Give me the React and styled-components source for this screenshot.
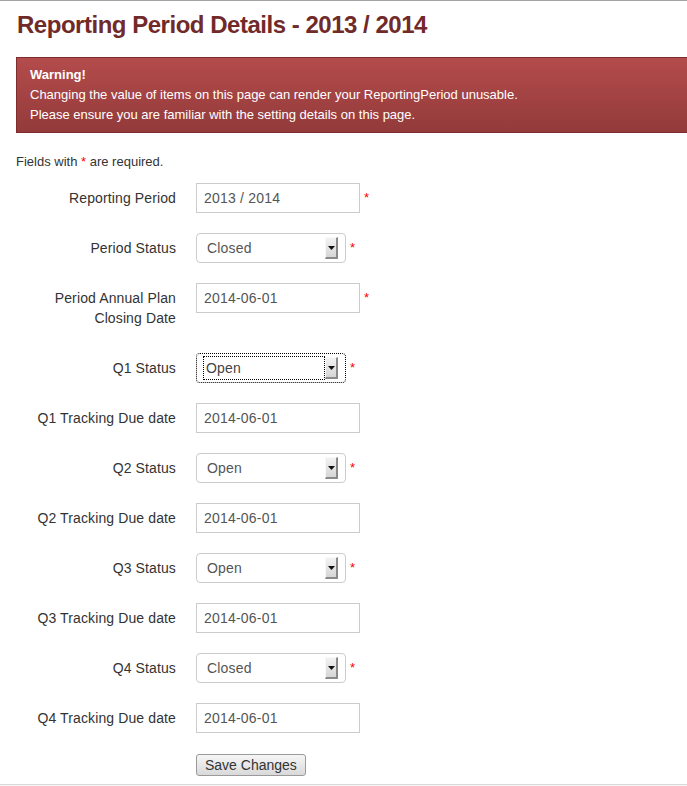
import React from "react";
import styled, { createGlobalStyle, css } from "styled-components";

const Global = createGlobalStyle`
  html, body { margin: 0; padding: 0; background: #fff; overflow: hidden; }
  body { font-family: "Liberation Sans", Arial, sans-serif; }
`;

const Page = styled.div`
  border-top: 1px solid #a3a3a3;
  min-height: 785px;
  display: flex;
  flex-direction: column;
`;

const Content = styled.div`
  padding-left: 16px;
  margin-right: -12px;
`;

const Title = styled.h1`
  margin: 4px 0 12px 1px;
  font-size: 24px;
  line-height: 40px;
  font-weight: bold;
  color: #712a2a;
  letter-spacing: -0.48px;
`;

const Alert = styled.div`
  border: 1px solid #7e2c2c;
  background: linear-gradient(#b44c4c, #933a3a);
  color: #fff;
  font-size: 13px;
  line-height: 20px;
  padding: 7px 14px 7px 13px;
`;

const AlertTitle = styled.div`
  font-weight: bold;
`;

const Note = styled.p`
  margin: 19px 0 11px 0;
  font-size: 13px;
  line-height: 20px;
  color: #333;
`;

const Req = styled.span`
  color: #f00;
  font-size: 13px;
  ${(p) =>
    p.$field &&
    css`
      margin-left: 4px;
      line-height: 30px;
      align-self: flex-start;
    `}
`;

const Form = styled.form`
  display: flex;
  flex-direction: column;
  gap: 20px;
`;

const Row = styled.div`
  display: flex;
  align-items: flex-start;
  gap: 20px;
`;

const Label = styled.label`
  width: 160px;
  flex: none;
  text-align: right;
  font-size: 14px;
  letter-spacing: 0.12px;
  line-height: 20px;
  padding: 5px 0;
  color: #333;
`;

const Controls = styled.div`
  display: flex;
  align-items: flex-start;
  margin-left: ${(p) => (p.$offset ? "180px" : "0")};
`;

const Input = styled.input`
  box-sizing: border-box;
  width: 164px;
  height: 30px;
  border: 1px solid #ccc;
  border-radius: 0;
  padding: 4px 6px 4px 7px;
  font-family: "Liberation Sans", Arial, sans-serif;
  font-size: 14px;
  letter-spacing: 0.2px;
  color: #555;
  background: #fff;
  outline: none;
`;

const Select = styled.div`
  box-sizing: border-box;
  width: 150px;
  height: 30px;
  border: 1px solid #ccc;
  border-radius: 4px;
  background: #fff;
  display: flex;
  align-items: center;
  padding: 0 7px 0 6px;
  font-size: 14px;
  letter-spacing: 0.2px;
  color: #555;
  ${(p) =>
    p.$focused &&
    css`
      border: 1px dotted #000;
    `}
`;

const SelectText = styled.span`
  flex: 1;
  box-sizing: border-box;
  height: 24px;
  line-height: 22px;
  padding-left: 3px;
  border: 1px solid transparent;
  ${(p) =>
    p.$focused &&
    css`
      border: 1px dotted #000;
      color: #444;
      padding-left: 2px;
    `}
`;

const ArrowBox = styled.span`
  box-sizing: border-box;
  width: 13px;
  height: 22px;
  flex: none;
  display: flex;
  align-items: center;
  justify-content: center;
  background: linear-gradient(#f2f2f2, #d6d6d6);
  border-top: 1px solid #f8f8f8;
  border-left: 1px solid #f8f8f8;
  border-right: 2px solid #8a8a8a;
  border-bottom: 2px solid #8a8a8a;
`;

const Button = styled.button`
  height: 22px;
  padding: 0 8px;
  border: 1px solid #9a9a9a;
  border-radius: 3px;
  background: linear-gradient(#f6f6f6, #d9d9d9);
  font-family: "Liberation Sans", Arial, sans-serif;
  font-size: 14px;
  color: #333;
  line-height: 20px;
  margin-top: 1px;
`;

const Footer = styled.div`
  margin-top: 8px;
  border-top: 1px solid #d8d8d8;
  background: #f6f6f6;
  flex: 1;
`;

function Arrow() {
  return (
    <svg width="7" height="4" viewBox="0 0 7 4">
      <path d="M0 0 H7 L3.5 4 Z" fill="#111" />
    </svg>
  );
}

function SelectBox({ value, focused }) {
  return (
    <Select $focused={focused}>
      <SelectText $focused={focused}>{value}</SelectText>
      <ArrowBox>
        <Arrow />
      </ArrowBox>
    </Select>
  );
}

const fields = [
  { label: "Reporting Period", type: "input", value: "2013 / 2014", req: true },
  { label: "Period Status", type: "select", value: "Closed", req: true },
  { label: "Period Annual Plan Closing Date", type: "input", value: "2014-06-01", req: true },
  { label: "Q1 Status", type: "select", value: "Open", req: true, focused: true },
  { label: "Q1 Tracking Due date", type: "input", value: "2014-06-01" },
  { label: "Q2 Status", type: "select", value: "Open", req: true },
  { label: "Q2 Tracking Due date", type: "input", value: "2014-06-01" },
  { label: "Q3 Status", type: "select", value: "Open", req: true },
  { label: "Q3 Tracking Due date", type: "input", value: "2014-06-01" },
  { label: "Q4 Status", type: "select", value: "Closed", req: true },
  { label: "Q4 Tracking Due date", type: "input", value: "2014-06-01" },
];

export default function App() {
  return (
    <>
      <Global />
      <Page>
        <Content>
          <Title>Reporting Period Details - 2013 / 2014</Title>
          <Alert>
            <AlertTitle>Warning!</AlertTitle>
            <div>Changing the value of items on this page can render your ReportingPeriod unusable.</div>
            <div>Please ensure you are familiar with the setting details on this page.</div>
          </Alert>
          <Note>
            Fields with <Req>*</Req> are required.
          </Note>
          <Form onSubmit={(e) => e.preventDefault()}>
            {fields.map((f) => (
              <Row key={f.label}>
                <Label>{f.label}</Label>
                <Controls>
                  {f.type === "input" ? (
                    <Input defaultValue={f.value} />
                  ) : (
                    <SelectBox value={f.value} focused={f.focused} />
                  )}
                  {f.req && <Req $field>*</Req>}
                </Controls>
              </Row>
            ))}
            <Controls $offset>
              <Button type="submit">Save Changes</Button>
            </Controls>
          </Form>
        </Content>
        <Footer />
      </Page>
    </>
  );
}
